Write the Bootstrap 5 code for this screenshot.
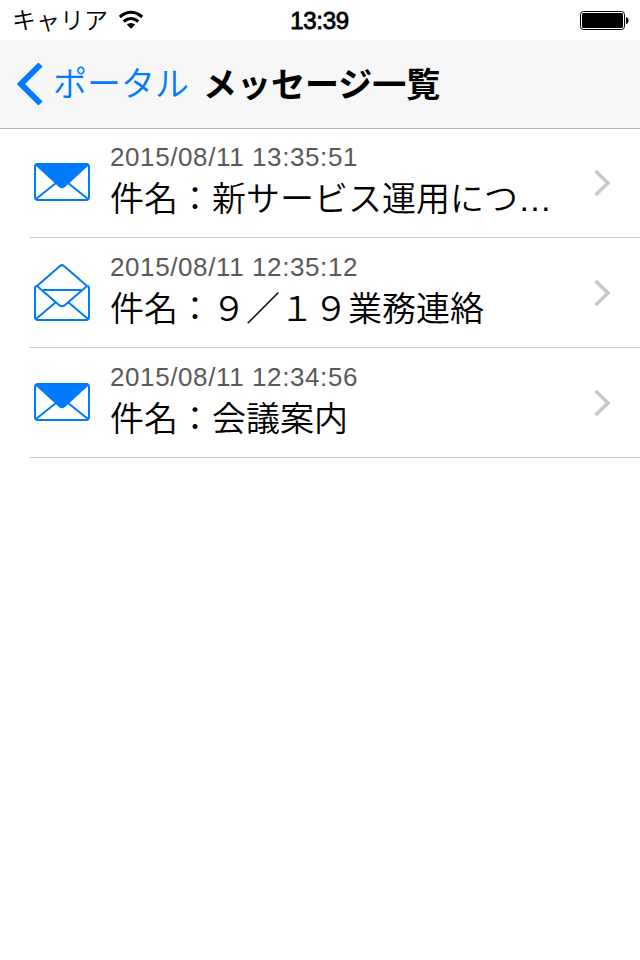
<!DOCTYPE html>
<html lang="ja">
<head>
<meta charset="utf-8">
<meta name="viewport" content="width=device-width, initial-scale=1">
<title>メッセージ一覧</title>
<link href="https://cdn.jsdelivr.net/npm/bootstrap@5.3.0/dist/css/bootstrap.min.css" rel="stylesheet">
<style>
body{font-family:"Liberation Sans","Noto Sans CJK JP",sans-serif;color:#000;background:#fff;overflow:hidden}
svg{display:block;flex:none}
.status-bar{height:40px;padding:0 11px 0 12px;line-height:38px}
.carrier{font-size:24px;font-weight:350;width:96px;margin-right:10px;padding-top:2px}
.clock{font-size:24px;font-weight:400;-webkit-text-stroke:.8px #000;letter-spacing:-.3px;padding-top:2px;margin-right:2px}
.title-bar{height:89px;background:#f7f7f7;border-bottom:1px solid #b2b2b2;padding:0 0 0 16px}
.back-link{color:#007aff;font-size:34px;font-weight:350;width:174px;margin-right:13px;line-height:88px}
.back-label{padding-left:1px}
.page-title{font-size:34px;font-weight:700;line-height:88px;padding-top:1px}
.message-list{margin:-1px 0 0 30px}
.message{height:110px;border-bottom:1px solid #c8c7cc;padding:0 29px 0 3px;color:#000}
.message-text{padding-left:3px}
.message-date{font-size:26px;letter-spacing:.6px;line-height:30px;color:#595959;margin-top:14px}
.message-subject{font-size:34px;font-weight:350;line-height:54px}
</style>
<script src="https://cdn.jsdelivr.net/npm/bootstrap@5.3.0/dist/js/bootstrap.bundle.min.js"></script>
</head>
<body>
<svg width="0" height="0" class="position-absolute" aria-hidden="true">
  <symbol id="closed" viewBox="0 0 58 58">
    <g fill="none" stroke="#007aff" stroke-width="2"><rect x="2" y="10" width="54" height="36" rx="3"/><path d="M3 45 L23 29 M55 45 L35 29"/></g>
    <path fill="#007aff" d="M2 11 Q3 9 5 9 H53 Q55 9 56 11 L32 33 Q29 35.400 26 33Z"/>
  </symbol>
  <symbol id="opened" viewBox="0 0 58 58">
    <path fill="none" stroke="#007aff" stroke-width="2" stroke-linejoin="round" d="M4 22 H4 Q2 22 2 24 V53 Q2 56 5 56 H53 Q56 56 56 53 V24 Q56 22 54 22 L31 2 Q29 .2 27 2 L4 22 L26 41 Q29 43.500 32 41 L54 22 M10 26 H48 M3 55 L23 38 M55 55 L35 38"/>
  </symbol>
  <symbol id="chevron" viewBox="0 0 18 28"><path d="M2.500 2 L15 14 L2.500 26" fill="none" stroke="#c7c7cc" stroke-width="3.600"/></symbol>
</svg>

<header>
  <div class="status-bar row g-0 align-items-center">
    <div class="col d-flex align-items-center">
      <span class="carrier text-nowrap">キャリア</span>
      <svg width="26" height="20" viewBox="0 0 26 20" aria-hidden="true"><path d="M1.800 7 Q13 -2.400 24.200 7 M5.700 11.500 Q13 5.500 20.300 11.500" fill="none" stroke="#000" stroke-width="3"/><path d="M8.800 14.500 Q13 11.500 17.200 14.500 L13 18.800Z"/></svg>
    </div>
    <div class="col-auto clock">13:39</div>
    <div class="col d-flex justify-content-end">
      <svg width="50" height="20" viewBox="0 0 50 20" aria-hidden="true"><rect x="1.500" y="1.500" width="44" height="18" rx="3" fill="none" stroke="#000"/><rect x="3" y="3" width="41" height="15" rx="1.500"/><path d="M47 7 Q49.500 7.500 49.500 10.500 Q49.500 13.500 47 14Z"/></svg>
    </div>
  </div>
  <nav class="title-bar d-flex align-items-center">
    <a href="#" class="back-link d-flex align-items-center text-decoration-none text-nowrap">
      <svg width="28" height="44" viewBox="0 0 28 44" class="me-2" aria-hidden="true"><path d="M24.500 2.500 L5 22 L24.500 41.500" fill="none" stroke="#007aff" stroke-width="6"/></svg>
      <span class="back-label">ポータル</span>
    </a>
    <h1 class="page-title mb-0 text-nowrap">メッセージ一覧</h1>
  </nav>
</header>
<main class="message-list list-group list-group-flush">
  <a href="#" class="message d-flex align-items-center text-decoration-none">
    <svg width="58" height="58" class="me-3" aria-hidden="true"><use href="#closed"/></svg>
    <div class="message-text flex-grow-1 align-self-start text-nowrap"><div class="message-date">2015/08/11 13:35:51</div><div class="message-subject">件名：新サービス運用につ…</div></div>
    <svg width="18" height="28" aria-hidden="true"><use href="#chevron"/></svg>
  </a>
  <a href="#" class="message d-flex align-items-center text-decoration-none">
    <svg width="58" height="58" class="me-3" aria-hidden="true"><use href="#opened"/></svg>
    <div class="message-text flex-grow-1 align-self-start text-nowrap"><div class="message-date">2015/08/11 12:35:12</div><div class="message-subject">件名：９／１９業務連絡</div></div>
    <svg width="18" height="28" aria-hidden="true"><use href="#chevron"/></svg>
  </a>
  <a href="#" class="message d-flex align-items-center text-decoration-none">
    <svg width="58" height="58" class="me-3" aria-hidden="true"><use href="#closed"/></svg>
    <div class="message-text flex-grow-1 align-self-start text-nowrap"><div class="message-date">2015/08/11 12:34:56</div><div class="message-subject">件名：会議案内</div></div>
    <svg width="18" height="28" aria-hidden="true"><use href="#chevron"/></svg>
  </a>
</main>
</body>
</html>
